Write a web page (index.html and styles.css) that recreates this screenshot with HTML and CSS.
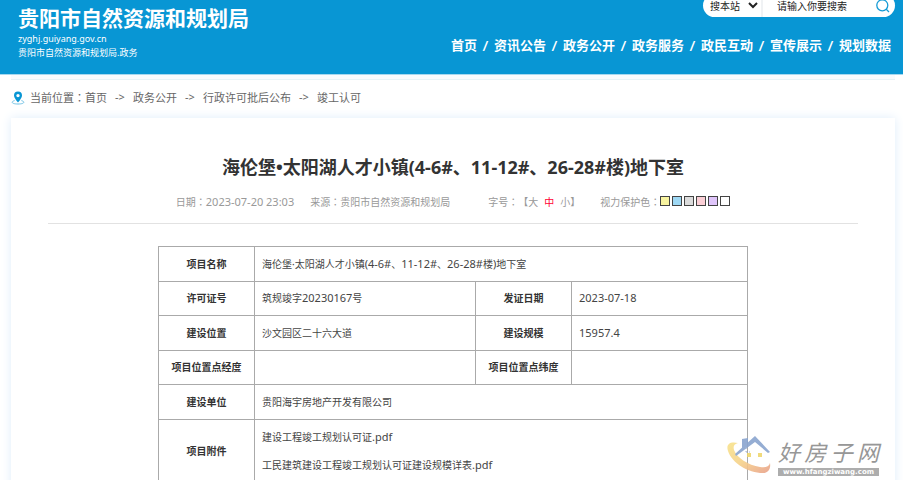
FILE: index.html
```html
<!DOCTYPE html>
<html lang="zh-CN">
<head>
<meta charset="utf-8">
<title>贵阳市自然资源和规划局</title>
<link rel="stylesheet" href="styles.css">
</head>
<body>
<div class="page">
  <header class="header">
    <div class="brand">
      <strong class="brand-name">贵阳市自然资源和规划局</strong>
      <span class="brand-url">zyghj.guiyang.gov.cn</span>
      <span class="brand-sub">贵阳市自然资源和规划局.政务</span>
    </div>
    <div class="header-side">
      <form class="search">
        <select class="search-scope" aria-label="搜索范围"><option>搜本站</option></select>
        <input class="search-input" type="text" aria-label="搜索" value="请输入你要搜索">
        <button class="search-button" type="button" aria-label="搜索">
          <svg width="14" height="14" viewBox="0 0 14 14" fill="none" stroke="#159bd5" stroke-width="1.3"><circle cx="6.3" cy="6.3" r="5.5"/><path d="M10 10l3 3"/></svg>
        </button>
      </form>
      <nav class="nav">
        <a href="#">首页</a><i>/</i><a href="#">资讯公告</a><i>/</i><a href="#">政务公开</a><i>/</i><a href="#">政务服务</a><i>/</i><a href="#">政民互动</a><i>/</i><a href="#">宣传展示</a><i>/</i><a href="#">规划数据</a>
      </nav>
    </div>
  </header>
  <div class="strip"></div>
  <div class="crumbs">
    <svg class="pin" width="14" height="14" viewBox="0 0 14 14"><path d="M3.6 9.6C-.2 10.5.2 13 7 13s7.200-2.500 3.400-3.400" fill="none" stroke="#6fc1e5" stroke-width="1"/><path fill="#0896d4" fill-rule="evenodd" d="M7 .6a4 4 0 0 0-4 4C3 7.200 7 11.600 7 11.600s4-4.400 4-7a4 4 0 0 0-4-4zm0 2.300a1.700 1.700 0 1 1 0 3.400 1.700 1.700 0 0 1 0-3.400z"/></svg>
    <span>当前位置<span class="colon">：</span></span><a href="#">首页</a><i>-&gt;</i><a href="#">政务公开</a><i>-&gt;</i><a href="#">行政许可批后公布</a><i>-&gt;</i><a href="#">竣工认可</a>
  </div>
  <main class="article">
    <h1 class="title">海伦堡•太阳湖人才小镇(4-6#、11-12#、26-28#楼)地下室</h1>
    <div class="meta">
      <span class="date">日期<span class="colon">：</span><time>2023-07-20 23:03</time></span>
      <span class="source">来源<span class="colon">：</span>贵阳市自然资源和规划局</span>
      <span class="sizes">字号<span class="colon">：</span>【<a href="#">大</a><a class="current" href="#">中</a><a href="#">小</a>】</span>
      <span class="eye">视力保护色<span class="colon">：</span></span>
      <span class="swatches">
        <button class="yellow" type="button" aria-label="黄色"></button>
        <button class="blue" type="button" aria-label="蓝色"></button>
        <button class="gray" type="button" aria-label="灰色"></button>
        <button class="pink" type="button" aria-label="粉色"></button>
        <button class="purple" type="button" aria-label="紫色"></button>
        <button class="white" type="button" aria-label="白色"></button>
      </span>
    </div>
    <table class="info">
      <colgroup><col class="c-label"><col class="c-wide"><col class="c-label"><col></colgroup>
      <tbody>
        <tr><th>项目名称</th><td colspan="3">海伦堡·太阳湖人才小镇<span class="num">(4-6#</span>、<span class="num">11-12#</span>、<span class="num">26-28#</span>楼<span class="num">)</span>地下室</td></tr>
        <tr><th>许可证号</th><td>筑规竣字<span class="num">20230167</span>号</td><th>发证日期</th><td class="num">2023-07-18</td></tr>
        <tr><th>建设位置</th><td>沙文园区二十六大道</td><th>建设规模</th><td class="num">15957.4</td></tr>
        <tr><th>项目位置点经度</th><td></td><th>项目位置点纬度</th><td></td></tr>
        <tr><th>建设单位</th><td colspan="3">贵阳海宇房地产开发有限公司</td></tr>
        <tr class="files"><th>项目附件</th><td colspan="3"><a href="#">建设工程竣工规划认可证<span class="num">.pdf</span></a><a href="#">工民建筑建设工程竣工规划认可证建设规模详表<span class="num">.pdf</span></a></td></tr>
      </tbody>
    </table>
  </main>
  <div class="watermark">
    <svg width="46" height="42" viewBox="0 0 46 42">
      <defs><linearGradient id="swoosh" x1="0" y1="0" x2="1" y2="1"><stop offset="0" stop-color="#f8e38b"/><stop offset=".5" stop-color="#f6d18a"/><stop offset="1" stop-color="#e9a08a"/></linearGradient></defs>
      <path fill="url(#swoosh)" d="M12 9C3 7 0 11 2 17c4 12 20 22 35 22 5 0 8-4 7-10-1 4-5 5-10 4C22 31 11 24 8 16c-1-4 0-6 4-7z"/>
      <path fill="#8aa5cf" d="M16 5l6-1v5l-6 6zM9 20L29 2l15 16-2 1L29 8 10 22z"/>
      <path fill="none" stroke="#9aaed0" stroke-dasharray="2 2" d="M20 13v5h4"/>
      <path fill="#efd66e" d="M21 19h4v4h-4zM32 19h4v4h-4z"/>
    </svg>
    <div class="watermark-text"><span class="watermark-name"><span>好</span><span>房</span><span>子</span><span>网</span></span><span class="watermark-url">www.hfangziwang.com</span></div>
  </div>
</div>
</body>
</html>
```
FILE: styles.css
```css
* { box-sizing: border-box; }
body {
  margin: 0;
  background: #fff;
  color: #444;
  font-family: "Noto Sans", "Noto Sans CJK SC", sans-serif;
  font-size: 10px;
  text-spacing-trim: space-all;
}
a { color: inherit; text-decoration: none; }
i { font-style: normal; }
button { padding: 0; border: 0; background: none; }
.page { position: relative; height: 100vh; overflow: hidden; }

.header {
  display: flex;
  justify-content: space-between;
  height: 75px;
  padding: 0 8px 0 18px;
  background: #0896d4;
  border-bottom: 1px solid #a6d8ef;
  color: #fff;
}
.brand { display: flex; flex-direction: column; padding-top: 4px; }
.brand-name { font-size: 21px; line-height: 28px; }
.brand-url { font-size: 9px; line-height: 14px; }
.brand-sub { font-size: 9px; line-height: 14px; }
.header-side { display: flex; flex-direction: column; align-items: flex-end; }
.search {
  display: flex;
  width: 192px;
  height: 23px;
  margin-top: -6px;
  overflow: hidden;
  background: #fff;
  border-radius: 12px;
}
.search-scope, .search-input {
  border: 0;
  background: transparent;
  color: #222;
  font-family: inherit;
  font-size: 10px;
}
.search-scope { width: 60px; padding: 0 0 0 3px; border-right: 2px solid #f0f2f4; }
.search-input { flex: 1; min-width: 0; padding: 0 0 0 14px; }
.search-button { width: 24px; padding-top: 1px; line-height: 0; }
.nav {
  display: flex;
  margin: 18px 4px 0 0;
  font-size: 13px;
  font-weight: 700;
  line-height: 20px;
}
.nav i { width: 17px; font-size: 15px; font-weight: 500; text-align: center; }
.strip { height: 5px; margin: 0 8px 0 11px; background: #f8fbfd; border-bottom: 1px solid #e8f3f7; }

.crumbs {
  display: flex;
  align-items: center;
  height: 38px;
  padding: 0 0 5px 11px;
  color: #666;
  font-size: 11px;
}
.crumbs i { width: 26px; text-align: center; }
.pin { margin: 2px 5px 0 0; }
.colon { font-family: "Noto Sans CJK TC", sans-serif; font-feature-settings: "locl" 0; }

.article {
  min-height: 400px;
  margin: 0 8px 0 11px;
  padding: 35px 37px 0;
  box-shadow: 0 0 10px #dfedfa;
}
.title {
  margin: 0;
  color: #333;
  font-size: 18px;
  line-height: 28px;
  text-align: center;
}
.meta {
  display: flex;
  align-items: center;
  justify-content: center;
  height: 43px;
  padding-bottom: 2px;
  margin-bottom: 22px;
  border-bottom: 1px solid #e2e2e2;
  color: #999;
}
.date { margin-right: 16px; }
.date time { font-size: 11px; }
.source { margin-right: 38px; }
.sizes { margin-right: 20px; }
.sizes .current { margin: 0 6px; color: #f03; }
.swatches { display: flex; gap: 2px; }
.swatches button { width: 10px; height: 10px; border: 1px solid #444; }
.swatches .yellow { background: #f8f4a0; }
.swatches .blue { background: #9ed8f4; }
.swatches .gray { background: #dcdcdc; }
.swatches .pink { background: #fbcfd6; }
.swatches .purple { background: #dfc5fa; }
.swatches .white { background: #fff; }

.info {
  width: 590px;
  max-width: 100%;
  margin: 0 auto;
  border-collapse: collapse;
  table-layout: fixed;
}
.c-label { width: 96px; }
.c-wide { width: 221px; }
.info tr { height: 35px; }
.info tr:nth-child(even) { height: 34px; }
.info th, .info td { padding: 0 7px 1px; border: 1px solid #aaa; line-height: 20px; }
.info th { padding: 0 0 1px; color: #333; }
.info .num { font-size: 11px; }
.info .files td { padding: 3px 7px 4px; }
.files a { display: block; line-height: 27px; }

.watermark {
  position: absolute;
  right: 24px;
  bottom: 4px;
  display: flex;
  gap: 6px;
  opacity: .9;
}
.watermark-text { display: flex; flex-direction: column; padding-top: 2px; }
.watermark-name {
  display: flex;
  justify-content: space-between;
  color: #8c8c8c;
  font-size: 22px;
  font-style: italic;
  font-weight: 400;
  line-height: 32px;
}
.watermark-url {
  padding: 0 5px;
  background: #a5a5a5;
  color: #fff;
  font-family: "DejaVu Sans", sans-serif;
  font-size: 7px;
  font-weight: 700;
  line-height: 8px;
}
```
